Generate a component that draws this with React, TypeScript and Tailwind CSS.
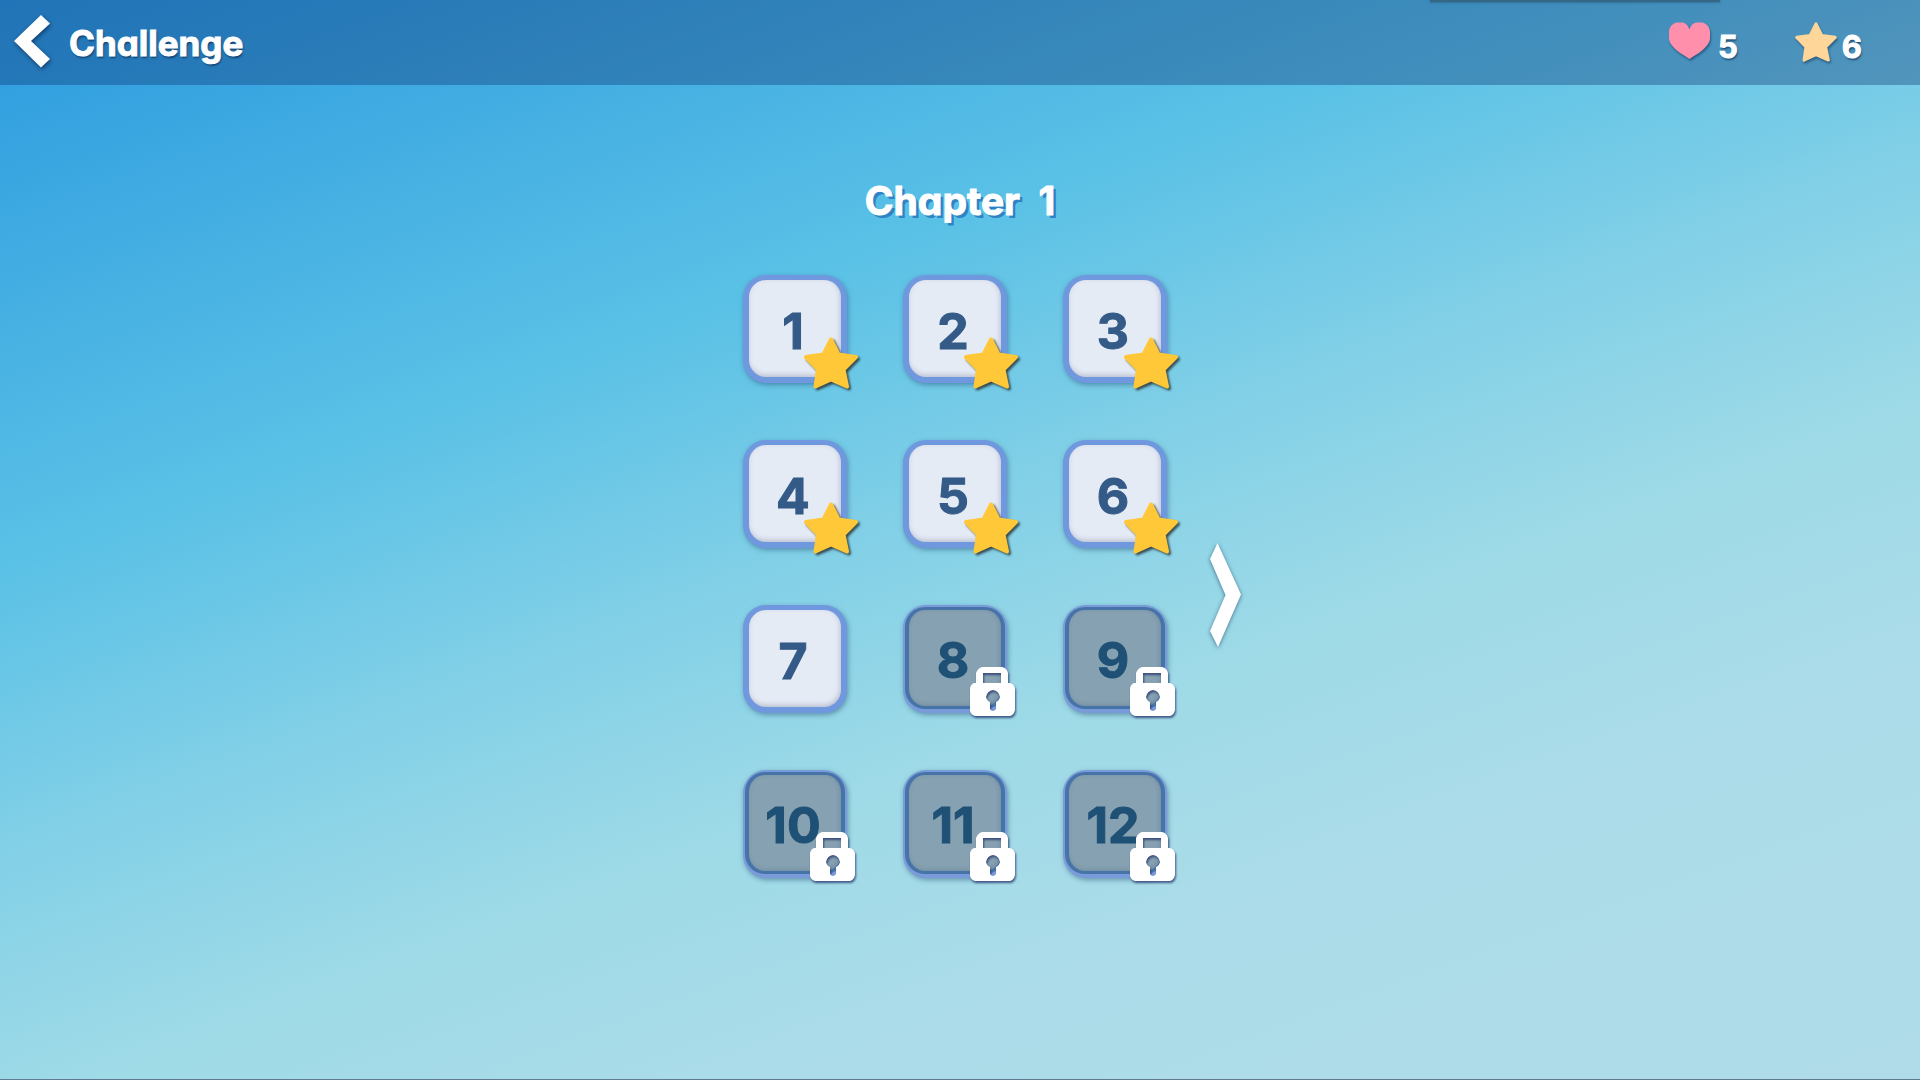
interface Level {
    id: number
    status: 'done' | 'open' | 'locked'
}

const levels: Level[] = [
    { id: 1, status: 'done' },
    { id: 2, status: 'done' },
    { id: 3, status: 'done' },
    { id: 4, status: 'done' },
    { id: 5, status: 'done' },
    { id: 6, status: 'done' },
    { id: 7, status: 'open' },
    { id: 8, status: 'locked' },
    { id: 9, status: 'locked' },
    { id: 10, status: 'locked' },
    { id: 11, status: 'locked' },
    { id: 12, status: 'locked' },
]

const Star = ({ className }: { className: string }) => (
    <svg viewBox="0 0 54 52" className={className} fill="currentColor" stroke="currentColor" strokeWidth="4" strokeLinejoin="round" aria-hidden="true">
        <path d="M27 2.5L34.500 17.500L52 20L39.500 32.500L43 49.500L27 42.500L11.500 49.500L14 32.500L2 20L19.500 17.500Z" />
    </svg>
)

const Heart = () => (
    <svg viewBox="0 0 41 37" className="mt-[3px] h-[37px] w-[41px] overflow-visible text-[#ff8fab] drop-shadow-[1px_2px_1px_rgba(20,60,100,0.6)]" fill="currentColor" aria-hidden="true">
        <path d="M20.500 7.500C19 3 16 .5 13 .5H8C4 1 0 5 0 10V16C0 21 4 25 8 28.500C12 32 17 34 20.500 37C24 34 29 32 33 28.500C37 25 41 21 41 16V10C41 5 37 1 33 .5H28C25 .5 22 3 20.500 7.500Z" />
    </svg>
)

const Lock = () => (
    <svg viewBox="0 0 46 50" className="absolute left-[67px] top-[62px] h-[50px] w-[46px] overflow-visible drop-shadow-[1px_2px_1px_rgba(40,55,110,0.8)]" fill="#fff" fillRule="evenodd" aria-hidden="true">
        <path d="M6 16V6Q8 1 12 0H32Q37 1 38 6V16H40Q44 17 45 21V43Q44 48 40 49H5Q1 48 0 44V21Q1 17 4 16ZM13 6V16H31V6ZM16 30Q17 34 20 35V42Q23 46 26 42V35Q29 34 30 30Q29 24 23 23Q17 24 16 30Z" />
    </svg>
)

const LevelButton = ({ level }: { level: Level }) => {
    const locked = level.status === 'locked'

    return (
        <button
            disabled={locked}
            className={
                locked
                    ? 'relative h-[108px] w-[104px] rounded-[23px] bg-[#7a9bda] px-[2px] pb-[4px] pt-[2px] text-[#1f5075] shadow-[1px_2px_5px_rgba(40,80,120,0.5)]'
                    : 'relative h-[108px] w-[104px] rounded-[23px] bg-[#6f98de] p-[6px] pt-[5px] text-[#345a87] shadow-[1px_2px_5px_rgba(40,80,120,0.5)]'
            }
        >
            <span
                className={
                    locked
                        ? 'flex h-full items-center justify-center rounded-[20px] border-x-4 border-y-[3px] border-[#4674a8] bg-[#86a1b1] pr-1 pt-1 shadow-[inset_-1px_-1px_4px_rgba(60,90,120,0.3)]'
                        : 'flex h-full items-center justify-center rounded-[17px] bg-[#e5ebf5] pr-1 pt-1 shadow-[inset_-1px_-2px_5px_rgba(90,90,130,0.3)]'
                }
            >
                {level.id}
            </span>
            {level.status === 'done' && (
                <Star className="absolute left-[61px] top-[62px] h-[52px] w-[54px] overflow-visible text-[#ffc838] drop-shadow-[2px_2px_1px_rgba(40,50,50,0.8)]" />
            )}
            {locked && <Lock />}
        </button>
    )
}

const App = () => {
  return (
    <div className="flex min-h-screen flex-col border-b border-[#607b91] bg-[linear-gradient(160deg,#2d9adf_0%,#34a1e0_6%,#5ac1e6_32%,#82d0e7_48%,#9edae7_62%,#acdce9_77%,#b0dce9_100%)] font-['Inter',sans-serif] font-bold [font-feature-settings:'cv11']">
        <header className="relative flex h-[85px] items-center justify-between bg-[#0c2d6c]/35 pl-[13px] pr-[58px] text-white">
            {/* edge of the drawer tucked above the screen */}
            <div className="absolute right-[200px] top-0 h-[2px] w-[290px] bg-[#336785] shadow-[0_0_3px_#245270]" />
            <div className="flex items-center gap-[18px]">
                <button aria-label="Back">
                    <svg viewBox="0 0 38 54" className="mb-1 h-[54px] w-[38px] overflow-visible drop-shadow-[1px_2px_2px_rgba(10,40,80,0.7)]" fill="#fff" aria-hidden="true">
                        <path d="M28 1L37 9.500L18 27L37 45L28 53.500L1 27Z" />
                    </svg>
                </button>
                <h1 className="text-[35px] leading-[48px] [-webkit-text-stroke:1px_#fff] [text-shadow:1px_2px_2px_rgba(10,40,80,0.7)]">Challenge</h1>
            </div>
            <div className="flex gap-[56px] text-[31px] leading-[40px] [text-shadow:1px_2px_2px_rgba(10,40,80,0.7)]">
                <div className="flex items-start gap-2">
                    <Heart />
                    <span className="pt-2 [-webkit-text-stroke:1px_#fff]">5</span>
                </div>
                <div className="flex items-start gap-1">
                    <Star className="mt-[3px] h-[40px] w-[44px] overflow-visible text-[#ffd699] drop-shadow-[1px_2px_1px_rgba(20,60,100,0.6)]" />
                    <span className="pt-2 [-webkit-text-stroke:1px_#fff]">6</span>
                </div>
            </div>
        </header>

        <main className="flex flex-col items-center pt-[88px]">
            <h2 className="whitespace-pre text-[39px] leading-[56px] text-white [-webkit-text-stroke:1px_#fff] [text-shadow:3px_3px_0_#2f83c4]">Chapter  1</h2>
            <div className="mt-[46px] grid w-full grid-cols-[1fr_auto_1fr] items-center">
                <div className="col-start-2 grid grid-cols-3 gap-x-[56px] gap-y-[57px] pr-[10px] text-[50px] leading-[64px] [-webkit-text-stroke:1px_currentColor]">
                    {levels.map((level) => (
                        <LevelButton key={level.id} level={level} />
                    ))}
                </div>
                <button aria-label="Next chapter" className="ml-[33px] mt-9 justify-self-start">
                    <svg viewBox="0 0 31 104" className="h-[104px] w-[31px] overflow-visible drop-shadow-[0_1px_2px_rgba(30,70,100,0.7)]" fill="#fff" aria-hidden="true">
                        <path d="M7.500 0L31 51.500L8 104L0 88L15.500 52L0 16Z" />
                    </svg>
                </button>
            </div>
        </main>
    </div>
  )
}

export default App
